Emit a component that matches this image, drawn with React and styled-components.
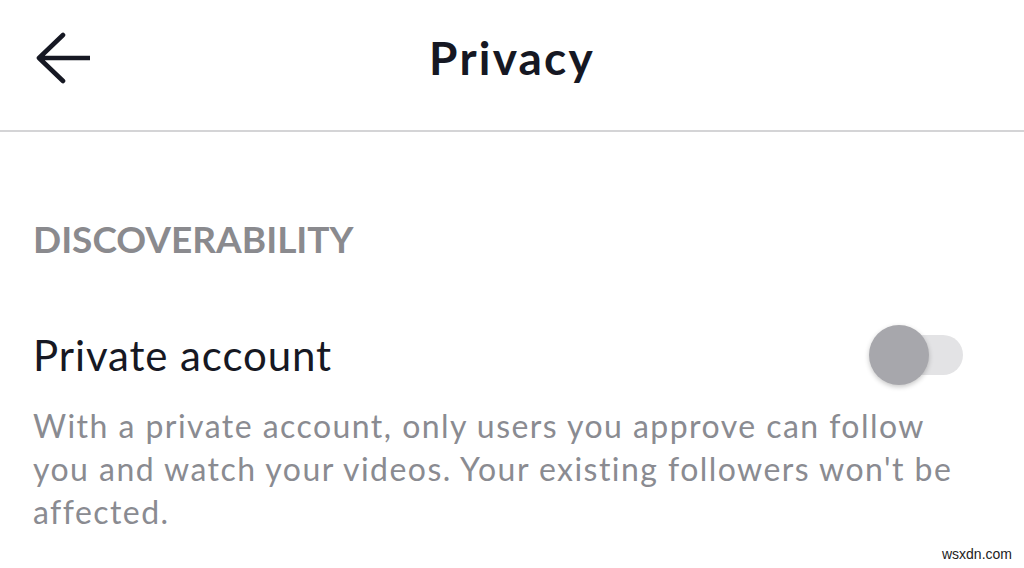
import React from "react";
import styled, { createGlobalStyle } from "styled-components";

const Global = createGlobalStyle`
  html, body { margin: 0; padding: 0; background: #fff; }
  body { font-family: Lato, "Noto Sans", sans-serif; }
`;

const Page = styled.div`
  width: 1024px;
  height: 568px;
  position: relative;
  overflow: hidden;
  background: #fff;
`;

const Header = styled.header`
  height: 132px;
  border-bottom: 2px solid #d4d4d6;
  box-sizing: border-box;
  display: grid;
  grid-template-columns: 120px 1fr 120px;
  align-items: center;
`;

const BackButton = styled.button`
  border: none;
  background: none;
  padding: 0 0 0 34px;
  height: 100%;
  display: flex;
  align-items: center;
  margin-top: -14px;
`;

const Title = styled.h1`
  margin: 0;
  margin-top: -16px;
  text-align: center;
  font-family: Lato, sans-serif;
  font-weight: 700;
  font-size: 46px;
  color: #161823;
  letter-spacing: 2.2px;
`;

const Content = styled.main`
  padding: 88px 56px 0 33px;
`;

const SectionLabel = styled.div`
  font-family: Lato, sans-serif;
  font-weight: 700;
  font-size: 37px;
  color: #8a8a8e;
  letter-spacing: 0px;
  line-height: 1;
`;

const Row = styled.div`
  display: flex;
  align-items: center;
  justify-content: space-between;
  margin-top: 77px;
  padding-right: 6px;
`;

const RowLabel = styled.div`
  font-family: Lato, sans-serif;
  font-size: 42px;
  color: #161823;
  line-height: 1;
  letter-spacing: 0.9px;
`;

const Track = styled.div`
  position: relative;
  width: 92px;
  height: 40px;
  border-radius: 20px;
  background: #e3e3e5;
  margin-right: -1px;
`;

const Knob = styled.div`
  position: absolute;
  left: -2px;
  top: -10px;
  width: 60px;
  height: 60px;
  border-radius: 50%;
  background: #a7a7ac;
  box-shadow: 0 2px 5px rgba(0, 0, 0, 0.22);
`;

const Description = styled.p`
  margin: 28px 0 0;
  padding-right: 8px;
  font-family: Lato, sans-serif;
  font-size: 32px;
  line-height: 43px;
  color: #8a8b91;
  letter-spacing: 1.45px;
`;

const Watermark = styled.div`
  position: absolute;
  right: 12px;
  bottom: 6px;
  font-family: "Liberation Sans", sans-serif;
  font-size: 14px;
  color: #222;
`;

export default function App() {
  return (
    <Page>
      <Global />
      <Header>
        <BackButton aria-label="Back">
          <svg width="56" height="52" viewBox="0 0 56 52" fill="none">
            <path
              d="M29 3 L5 26 L29 49 M5 26 H55"
              stroke="#161823"
              strokeWidth="4.6"
              strokeLinecap="round"
              strokeLinejoin="round"
            />
          </svg>
        </BackButton>
        <Title>Privacy</Title>
        <div />
      </Header>
      <Content>
        <SectionLabel>DISCOVERABILITY</SectionLabel>
        <Row>
          <RowLabel>Private account</RowLabel>
          <Track>
            <Knob />
          </Track>
        </Row>
        <Description>
          With a private account, only users you approve can follow you and watch your videos. Your existing followers won't be affected.
        </Description>
      </Content>
      <Watermark>wsxdn.com</Watermark>
    </Page>
  );
}
